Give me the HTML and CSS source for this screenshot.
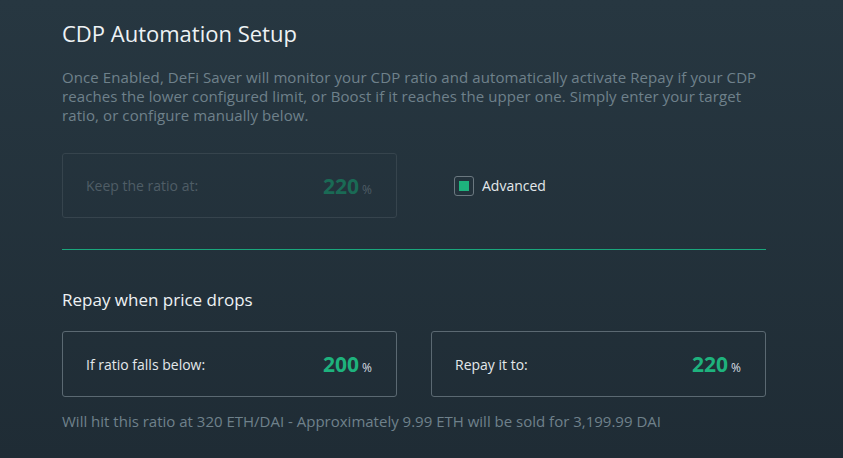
FILE: index.html
```html
<!DOCTYPE html>
<html>
<head>
<meta charset="utf-8">
<link rel="stylesheet" href="styles.css">
</head>
<body>
<main class="setup">
  <h1 class="title">CDP Automation Setup</h1>
  <p class="intro">Once Enabled, DeFi Saver will monitor your CDP ratio and automatically activate Repay if your CDP reaches the lower configured limit, or Boost if it reaches the upper one. Simply enter your target ratio, or configure manually below.</p>

  <div class="row top-row">
    <div class="field field-disabled">
      <span class="label">Keep the ratio at:</span>
      <span class="value"><b>220</b><i>%</i></span>
    </div>
    <label class="check">
      <span class="box"><span class="tick"></span></span>
      <span class="check-label">Advanced</span>
    </label>
  </div>

  <hr class="divider">

  <h2 class="subtitle">Repay when price drops</h2>
  <div class="row pair">
    <div class="field">
      <span class="label">If ratio falls below:</span>
      <span class="value"><b>200</b><i>%</i></span>
    </div>
    <div class="field">
      <span class="label">Repay it to:</span>
      <span class="value"><b>220</b><i>%</i></span>
    </div>
  </div>
  <p class="note">Will hit this ratio at 320 ETH/DAI - Approximately 9.99 ETH will be sold for 3,199.99 DAI</p>
</main>
</body>
</html>
```
FILE: styles.css
```css
html, body {
  margin: 0;
  height: 100%;
}
body {
  background: linear-gradient(180deg, #273741 0%, #1f2c35 100%);
  font-family: "Open Sans", "Liberation Sans", sans-serif;
  color: #e4e9ec;
  overflow: hidden;
}
.setup {
  width: 704px;
  padding: 18px 0 0 62px;
}
.title {
  margin: 0;
  font-size: 22px;
  font-weight: 400;
  line-height: 30px;
  color: #eef2f4;
}
.intro {
  margin: 20px 0 0;
  font-size: 15px;
  line-height: 19px;
  letter-spacing: 0.09px;
  color: #6f818b;
}
.row {
  display: flex;
  align-items: center;
}
.top-row {
  margin-top: 28px;
}
.field {
  box-sizing: border-box;
  width: 335px;
  height: 66px;
  border: 1px solid #5b6972;
  border-radius: 3px;
  display: flex;
  align-items: center;
  justify-content: space-between;
  padding: 0 24px 0 23px;
}
.field-disabled {
  height: 65px;
  border-color: #36444d;
}
.label {
  font-size: 14px;
  color: #e3e8eb;
}
.value b {
  font-size: 21px;
  font-weight: 700;
  color: #1eb27d;
}
.value i {
  font-style: normal;
  font-size: 12px;
  color: #d8dee2;
  margin-left: 3px;
}
.field-disabled .label { color: #4f5d66; }
.field-disabled .value b { color: #1a6a55; }
.field-disabled .value i { color: #4f5d66; }
.check {
  display: flex;
  align-items: center;
  margin-left: 57px;
}
.box {
  box-sizing: border-box;
  width: 20px;
  height: 20px;
  border: 1px solid #6b7880;
  border-radius: 3px;
  display: flex;
  align-items: center;
  justify-content: center;
}
.tick {
  width: 10px;
  height: 10px;
  background: #1eb27d;
}
.check-label {
  margin-left: 8px;
  font-size: 14px;
  color: #e3e8eb;
}
.divider {
  margin: 31px 0 0;
  border: 0;
  height: 1px;
  background: #1aa67c;
}
.subtitle {
  margin: 38px 0 0;
  font-size: 17px;
  font-weight: 400;
  line-height: 24px;
  color: #eef2f4;
}
.pair {
  margin-top: 19px;
  justify-content: space-between;
}
.note {
  margin: 14px 0 0;
  font-size: 15px;
  line-height: 20px;
  color: #6f818b;
}
```
